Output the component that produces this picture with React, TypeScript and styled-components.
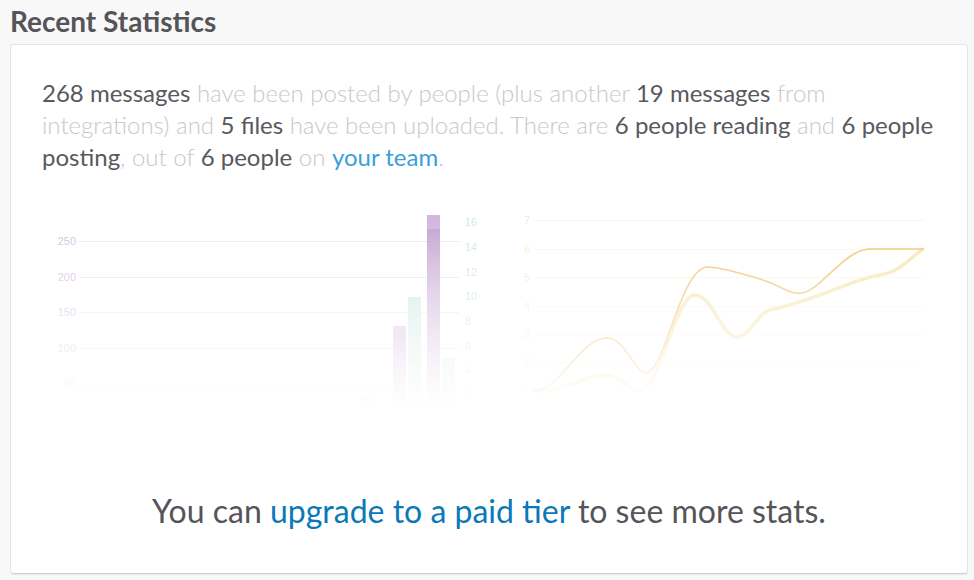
import React from "react";
import styled, { createGlobalStyle } from "styled-components";

const GlobalStyle = createGlobalStyle`
  html, body { margin: 0; padding: 0; }
  body {
    background: #f8f8f8;
    font-family: Lato, "Open Sans", "Liberation Sans", sans-serif;
    -webkit-font-smoothing: antialiased;
  }
`;

const Page = styled.div`
  padding: 5px 6px 6px 10px;
`;

const Title = styled.h2`
  margin: 0 0 6px;
  font-size: 28px;
  line-height: 33px;
  font-weight: 700;
  color: #555459;
`;

const Card = styled.section`
  box-sizing: border-box;
  height: 530px;
  background: #fff;
  border: 1px solid #e4e4e4;
  border-bottom-color: #cfcfcf;
  border-radius: 4px;
  box-shadow: 0 1px 1px rgba(0, 0, 0, 0.06);
  padding: 32px 31px 0;
  display: flex;
  flex-direction: column;
`;

const Summary = styled.p`
  margin: 0;
  font-size: 24px;
  line-height: 32px;
  font-weight: 300;
  color: #c8c8c8;
`;

const Strong = styled.span`
  font-weight: 400;
  color: #59585d;
`;

const Link = styled.a<{ $tone?: "soft" | "deep" }>`
  color: ${(p) => (p.$tone === "deep" ? "#0b78b9" : "#3a9fd9")};
  font-weight: 400;
  text-decoration: none;
`;

const ChartsRow = styled.div`
  margin: 37px 0 0 -2px;
  display: flex;
  gap: 20px;
  height: 200px;
`;

const FadedChart = styled.svg`
  display: block;
  flex: none;
  -webkit-mask-image: linear-gradient(to bottom, rgba(0, 0, 0, 1) 0%, rgba(0, 0, 0, 0.55) 45%, rgba(0, 0, 0, 0) 100%);
  mask-image: linear-gradient(to bottom, rgba(0, 0, 0, 1) 0%, rgba(0, 0, 0, 0.55) 45%, rgba(0, 0, 0, 0) 100%);
`;

const AxisText = styled.text`
  font-family: "Liberation Sans", Arial, sans-serif;
  font-size: 11px;
`;

const Upsell = styled.p`
  margin: 81px 0 0;
  text-align: center;
  font-size: 32px;
  line-height: 40px;
  font-weight: 400;
  color: #555459;
`;

const leftTicks = [
  { label: "250", y: 31 },
  { label: "200", y: 67 },
  { label: "150", y: 102 },
  { label: "100", y: 138 },
  { label: "50", y: 174 },
];

const rightTicks = [
  { label: "16", y: 12 },
  { label: "14", y: 37 },
  { label: "12", y: 62 },
  { label: "10", y: 86 },
  { label: "8", y: 111 },
  { label: "6", y: 136 },
  { label: "4", y: 160 },
  { label: "2", y: 185 },
];

const bars = [
  { x: 319, top: 187, color: "#e4e4e4" },
  { x: 353, top: 116, cap: 123, color: "url(#purpleBar)", capColor: "#dcc6e4" },
  { x: 368, top: 87, color: "url(#greenBar)" },
  { x: 387, top: 5, cap: 19, color: "url(#purpleBar)", capColor: "#d2b3dc" },
  { x: 402, top: 148, color: "url(#greenBar)" },
];

const BarChart = () => (
  <FadedChart width={440} height={200} viewBox="0 0 440 200">
    <defs>
      <linearGradient id="purpleBar" x1="0" y1="0" x2="0" y2="200" gradientUnits="userSpaceOnUse">
        <stop offset="0" stopColor="#bf9bcd" />
        <stop offset="1" stopColor="#e8dcec" />
      </linearGradient>
      <linearGradient id="greenBar" x1="0" y1="0" x2="0" y2="200" gradientUnits="userSpaceOnUse">
        <stop offset="0" stopColor="#c2e4dc" />
        <stop offset="1" stopColor="#e4f2ef" />
      </linearGradient>
    </defs>
    {leftTicks.map((t) => (
      <g key={t.label}>
        <line x1={39} x2={419} y1={t.y + 0.5} y2={t.y + 0.5} stroke="#efe3f2" strokeWidth={1} />
        <AxisText x={36} y={t.y + 4} textAnchor="end" fill="#d2b9de">
          {t.label}
        </AxisText>
      </g>
    ))}
    {rightTicks.map((t) => (
      <AxisText key={t.label} x={425} y={t.y + 4} fill="#c9e7e0">
        {t.label}
      </AxisText>
    ))}
    {bars.map((b) => (
      <g key={b.x}>
        <rect x={b.x} y={b.top} width={13} height={200 - b.top} fill={b.color} />
        {b.cap !== undefined && (
          <rect x={b.x} y={b.top} width={13} height={b.cap - b.top} fill={b.capColor} />
        )}
      </g>
    ))}
  </FadedChart>
);

const lineTicks = [
  { label: "7", y: 10 },
  { label: "6", y: 39 },
  { label: "5", y: 67 },
  { label: "4", y: 96 },
  { label: "3", y: 124 },
  { label: "2", y: 152 },
  { label: "1", y: 181 },
];

const LineChart = () => (
  <FadedChart width={440} height={200} viewBox="0 0 440 200">
    {lineTicks.map((t) => (
      <g key={t.label}>
        <line x1={34} x2={424} y1={t.y + 0.5} y2={t.y + 0.5} stroke="#fcf5e2" strokeWidth={1} />
        <AxisText x={27} y={t.y + 4} textAnchor="middle" fill="#f6eac6">
          {t.label}
        </AxisText>
      </g>
    ))}
    <path
      d="M34,181 C70,181 85,165 103,165 C120,165 128,180 140,180 C160,180 175,85 195,85 C212,85 222,127 237,127 C250,127 258,102 270,100 C285,97 300,92 320,85 C340,78 360,68 380,65 C400,62 410,48 423,39"
      fill="none"
      stroke="#f6e4b0"
      strokeWidth={3.5}
      strokeLinecap="round"
    />
    <path
      d="M34,181 C60,181 80,128 107,128 C125,128 135,163 146,163 C165,163 180,57 208,57 C220,57 235,62 260,69 C280,75 290,85 302,83 C320,81 345,39 370,39 L423,39"
      fill="none"
      stroke="#f2bf66"
      strokeWidth={1.6}
      strokeLinecap="round"
    />
  </FadedChart>
);

export default function App() {
  return (
    <Page>
      <GlobalStyle />
      <Title>Recent Statistics</Title>
      <Card>
        <Summary>
          <Strong>268 messages</Strong> have been posted by people (plus another{" "}
          <Strong>19 messages</Strong> from integrations) and <Strong>5 files</Strong> have been
          uploaded. There are <Strong>6 people reading</Strong> and <Strong>6 people posting</Strong>,
          out of <Strong>6 people</Strong> on <Link href="#">your team</Link>.
        </Summary>
        <ChartsRow>
          <BarChart />
          <LineChart />
        </ChartsRow>
        <Upsell>
          You can <Link href="#" $tone="deep">upgrade to a paid tier</Link> to see more stats.
        </Upsell>
      </Card>
    </Page>
  );
}
